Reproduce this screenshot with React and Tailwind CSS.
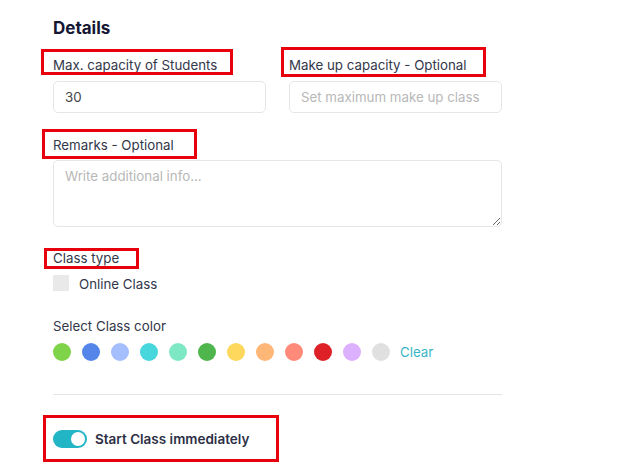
import { useState } from 'react';

const colors = [
  '#7ed348', '#5486ea', '#a4bffc', '#48d6dd', '#7de8c3', '#4fb64d',
  '#fdd85d', '#ffb778', '#ff8a7a', '#dd2127', '#dcb0fc', '#e0e0e0',
];

function Mark({ className }) {
  return <div className={`absolute border-[3px] border-[#e8000d] pointer-events-none ${className}`}></div>;
}

export default function App() {
  const [on, setOn] = useState(true);

  return (
    <div className="relative w-[642px] h-[472px] overflow-hidden bg-white font-['Inter',sans-serif] text-[#33374a]">
      <div className="pl-[53px] pt-[17px] w-[502px]">
        {/* Title */}
        <h2 className="text-[17px] leading-[22px] font-bold text-[#141634]">Details</h2>

        {/* Capacity row */}
        <div className="mt-[18px] flex gap-[23px]">
          <div className="w-[213px]">
            <label className="block text-[13.3px] leading-[16px]">Max. capacity of Students</label>
            <input
              defaultValue="30"
              className="mt-[8px] w-full h-[32px] px-[11px] rounded-[5px] border border-[#e6e6e6] text-[13.3px] text-[#444] outline-none"
            />
          </div>
          <div className="w-[213px]">
            <label className="block text-[13.3px] leading-[16px]">Make up capacity - Optional</label>
            <input
              placeholder="Set maximum make up class"
              className="mt-[8px] w-full h-[32px] px-[11px] rounded-[5px] border border-[#e6e6e6] text-[13.3px] placeholder:text-[#b8b8b8] outline-none"
            />
          </div>
        </div>

        {/* Remarks */}
        <label className="block mt-[24px] text-[13.3px] leading-[16px]">Remarks - Optional</label>
        <textarea
          placeholder="Write additional info..."
          className="block mt-[7px] w-[449px] h-[67px] px-[11px] py-[6px] rounded-[5px] border border-[#e6e6e6] text-[13.3px] placeholder:text-[#b8b8b8] outline-none"
        ></textarea>

        {/* Class type */}
        <label className="block mt-[23px] text-[13.3px] leading-[16px]">Class type</label>
        <div className="mt-[7px] flex items-center gap-[10px]">
          <span className="w-[16px] h-[16px] bg-[#e9e9e9]"></span>
          <span className="mt-[3px] text-[13.3px] leading-[16px]">Online Class</span>
        </div>

        {/* Colour picker */}
        <p className="mt-[26px] text-[13.3px] leading-[16px]">Select Class color</p>
        <div className="mt-[9px] flex items-center gap-[11px]">
          {colors.map((c) => (
            <span key={c} className="w-[18px] h-[18px] rounded-full" style={{ backgroundColor: c }}></span>
          ))}
          <button className="ml-[-1px] text-[13.3px] leading-[16px] text-[#3ab5c8]">Clear</button>
        </div>

        <div className="mt-[33px] h-px w-[449px] bg-[#e4e4e4]"></div>

        {/* Toggle */}
        <div className="mt-[34px] flex items-center gap-[8px]">
          <button
            onClick={() => setOn(!on)}
            className={`w-[34px] h-[18px] rounded-full flex items-center px-[2px] ${on ? 'bg-[#22b5c6] justify-end' : 'bg-gray-300 justify-start'}`}
          >
            <span className="w-[14px] h-[14px] rounded-full bg-white"></span>
          </button>
          <span className="text-[13.5px] font-semibold text-[#2c2f45]">Start Class immediately</span>
        </div>
      </div>

      {/* Annotation boxes */}
      <Mark className="left-[41px] top-[49px] w-[192px] h-[26px]" />
      <Mark className="left-[281px] top-[47px] w-[205px] h-[30px]" />
      <Mark className="left-[42px] top-[129px] w-[155px] h-[30px]" />
      <Mark className="left-[44px] top-[248px] w-[95px] h-[21px]" />
      <Mark className="left-[43px] top-[415px] w-[236px] h-[47px]" />
    </div>
  );
}
